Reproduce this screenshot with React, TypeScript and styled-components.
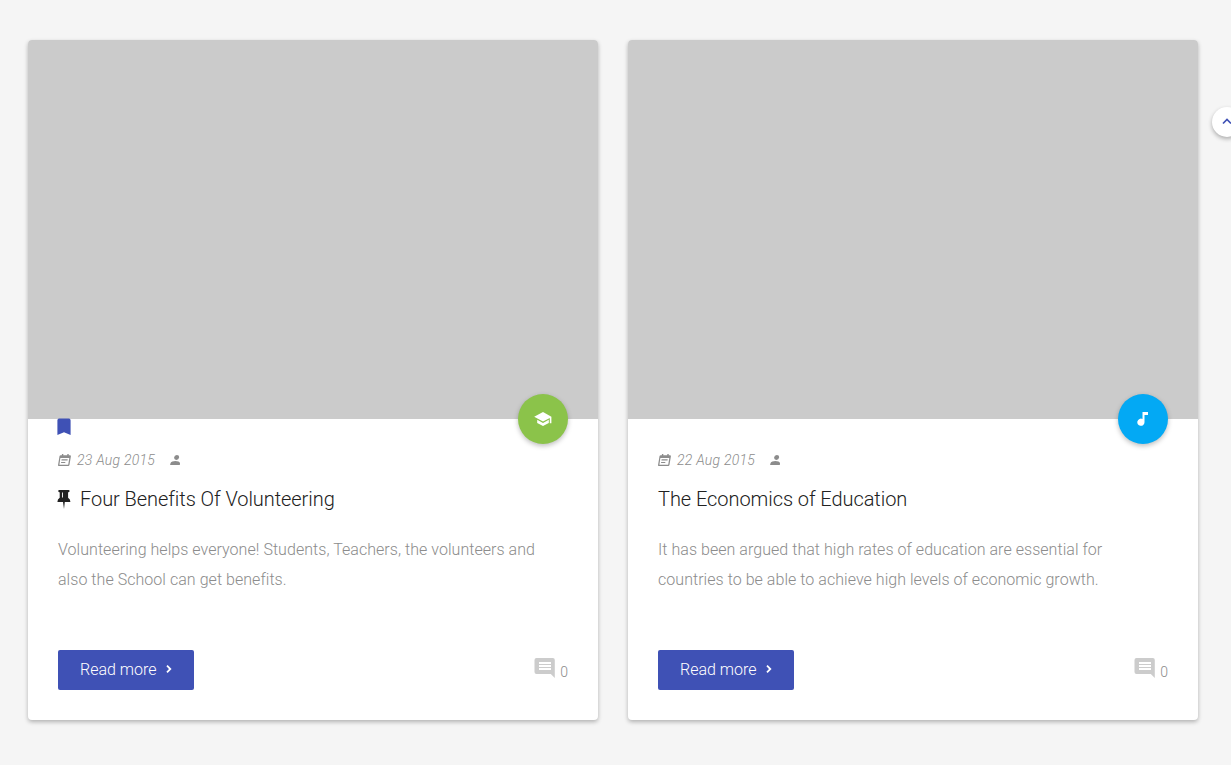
import React from 'react';
import styled, { createGlobalStyle } from 'styled-components';

const Global = createGlobalStyle`
  * { box-sizing: border-box; }
  body { margin: 0; background: #f5f5f5; font-family: Roboto, sans-serif; font-weight: 300; overflow: hidden; }
  svg { display: block; flex: none; }
`;

const Page = styled.main`
  display: flex;
  gap: 30px;
  padding: 40px 28px;
  height: 765px;
`;

const Card = styled.article`
  position: relative;
  display: flex;
  flex-direction: column;
  flex: 0 0 570px;
  height: 680px;
  background: #fff;
  border-radius: 4px;
  box-shadow: 0 2px 4px rgba(0, 0, 0, 0.28);
`;

const Cover = styled.div`
  height: 379px;
  background: #cbcbcb;
  border-radius: 4px 4px 0 0;
`;

const Badge = styled.div<{ $color: string }>`
  position: absolute;
  top: 354px;
  right: 30px;
  display: grid;
  place-items: center;
  width: 50px;
  height: 50px;
  border-radius: 50%;
  background: ${(p) => p.$color};
  color: #fff;
  box-shadow: 0 2px 5px rgba(0, 0, 0, 0.26);
`;

const Sticky = styled.div`
  position: absolute;
  top: 378px;
  left: 29px;
  color: #3f51b5;
`;

const Body = styled.div`
  display: flex;
  flex-direction: column;
  flex: 1;
  padding: 31px 30px 30px;
`;

const Meta = styled.div`
  display: flex;
  align-items: center;
  height: 20px;
  color: #8c8c8c;
  font-size: 14px;
  font-style: italic;
  letter-spacing: 0.24px;
  svg { margin-bottom: 1px; }
`;

const MetaDate = styled.span`
  margin: 0 15px 0 6px;
`;

const Title = styled.h2`
  display: flex;
  align-items: center;
  gap: 9px;
  height: 30px;
  margin: 14px 0 21px;
  color: #212121;
  font-size: 20px;
  font-weight: 300;
  letter-spacing: -0.06px;
  svg { margin: 0 0 0 -1px; }
`;

const Excerpt = styled.p`
  margin: 0;
  color: #8c8c8c;
  font-size: 16px;
  line-height: 30px;
  letter-spacing: 0.045px;
  white-space: pre-line;
`;

const Footer = styled.footer`
  display: flex;
  align-items: center;
  justify-content: space-between;
  margin-top: auto;
`;

const ReadMore = styled.button`
  display: flex;
  align-items: center;
  gap: 10px;
  width: 136px;
  height: 40px;
  padding: 0 0 1px 22px;
  border: 0;
  border-radius: 2px;
  background: #3f51b5;
  color: #fff;
  font: 300 16px Roboto, sans-serif;
  svg { margin-bottom: 1px; }
`;

const Comments = styled.div`
  display: flex;
  align-items: flex-start;
  gap: 5px;
  height: 24px;
  color: #8c8c8c;
  font-size: 14px;
  line-height: 28px;
`;

const ToTop = styled.div`
  position: absolute;
  top: 107px;
  left: 1212px;
  display: grid;
  place-items: center;
  width: 30px;
  height: 30px;
  padding-bottom: 2px;
  border-radius: 50%;
  background: #fff;
  color: #3f51b5;
  box-shadow: 0 2px 4px rgba(0, 0, 0, 0.3);
`;

const SchoolIcon = () => (
  <svg width="18" height="14" viewBox="0 0 18 14" fill="currentColor">
    <path d="M9 0 .2 4.8 9 9.5l6.8-3.6v5.3h1.6V4.8zM3.2 7.8V11L9 14l5.8-3V7.8L9 11z" />
  </svg>
);

const NoteIcon = () => (
  <svg width="12" height="14" viewBox="0 0 12 14" fill="currentColor">
    <path d="M5.5 0H11v3H7.5v7.2A3.6 3.6 0 1 1 5.5 7z" />
  </svg>
);

const BookmarkIcon = () => (
  <svg width="14" height="17" viewBox="0 0 14 17" fill="currentColor">
    <path d="M2 .4h10a2 2 0 0 1 1.6 1.8V17L7 14.2.4 17V2.2A2 2 0 0 1 2 .4z" />
  </svg>
);

const CalendarIcon = () => (
  <svg width="13" height="12" viewBox="0 0 13 12" fill="currentColor" fillRule="evenodd">
    <path d="M4 0h1.4l-.2 1.2h4L9.4 0h1.4l-.2 1.2H12q1 0 .9 1l-1.4 8.6Q11.3 12 10.2 12H1Q-.1 12 .1 10.8L1.5 2.3Q1.7 1.2 2.8 1.2h1zM2.4 4 1.4 10.7h8.8L11.3 4zM3.6 5.3h6.1l-.2 1.2H3.4zM3.2 7.9h4.2l-.2 1.2H3z" />
  </svg>
);

const PersonIcon = () => (
  <svg width="12" height="10" viewBox="0 0 12 10" fill="currentColor">
    <path d="M6.9 0a2.3 2.3 0 0 1 2.2 2.6A2.8 2.8 0 0 1 6.3 5a2.3 2.3 0 0 1-2.2-2.5A2.8 2.8 0 0 1 6.9 0zM.4 8.4C.7 6.7 3.6 6 5.4 6c2 0 4.8.7 4.6 2.4L9.8 10H.1z" />
  </svg>
);

const PinIcon = () => (
  <svg width="14" height="19" viewBox="0 0 14 19" fill="currentColor" fillRule="evenodd">
    <path d="M2.2 0h9.4q1 0 1 1t-1 1.2h-.5v5.6q2.3 1.4 2.3 4.2H7.8L7 19l-1-7H.4q0-2.8 2.3-4.2V2.2h-.5q-1-.2-1-1.2t1-1zM5 2.5v5h.9v-5z" />
  </svg>
);

const ChevronRightIcon = () => (
  <svg width="6" height="8" viewBox="0 0 6 8" fill="none" stroke="currentColor" strokeWidth="1.8">
    <path d="m1 .7 3.3 3.3L1 7.3" />
  </svg>
);

const ChevronUpIcon = () => (
  <svg width="10" height="7" viewBox="0 0 10 7" fill="none" stroke="currentColor" strokeWidth="1.7">
    <path d="m1 5.5 4-4 4 4" />
  </svg>
);

const CommentIcon = () => (
  <svg width="21" height="20" viewBox="0 0 21 20" fill="#ccc" fillRule="evenodd">
    <path d="M2.5 0h16.3q2 0 2 2v18l-4-4H2.5q-2 0-2-2V2q0-2 2-2zM5 4v2h12V4zm0 3v2h12V7zm0 3v2h12v-2z" />
  </svg>
);

const posts = [
  { date: '23 Aug 2015', title: 'Four Benefits Of Volunteering', text: 'Volunteering helps everyone! Students, Teachers, the volunteers and\nalso the School can get benefits.', color: '#8bc34a', icon: <SchoolIcon />, sticky: true },
  { date: '22 Aug 2015', title: 'The Economics of Education', text: 'It has been argued that high rates of education are essential for\ncountries to be able to achieve high levels of economic growth.', color: '#03a9f4', icon: <NoteIcon />, sticky: false },
];

export default function App() {
  return (
    <>
      <Global />
      <Page>
        {posts.map((p) => (
          <Card key={p.title}>
            <Cover />
            <Badge $color={p.color}>{p.icon}</Badge>
            {p.sticky && <Sticky><BookmarkIcon /></Sticky>}
            <Body>
              <Meta><CalendarIcon /><MetaDate>{p.date}</MetaDate><PersonIcon /></Meta>
              <Title>{p.sticky && <PinIcon />}<span>{p.title}</span></Title>
              <Excerpt>{p.text}</Excerpt>
              <Footer>
                <ReadMore>Read more <ChevronRightIcon /></ReadMore>
                <Comments><CommentIcon />0</Comments>
              </Footer>
            </Body>
          </Card>
        ))}
      </Page>
      <ToTop><ChevronUpIcon /></ToTop>
    </>
  );
}
